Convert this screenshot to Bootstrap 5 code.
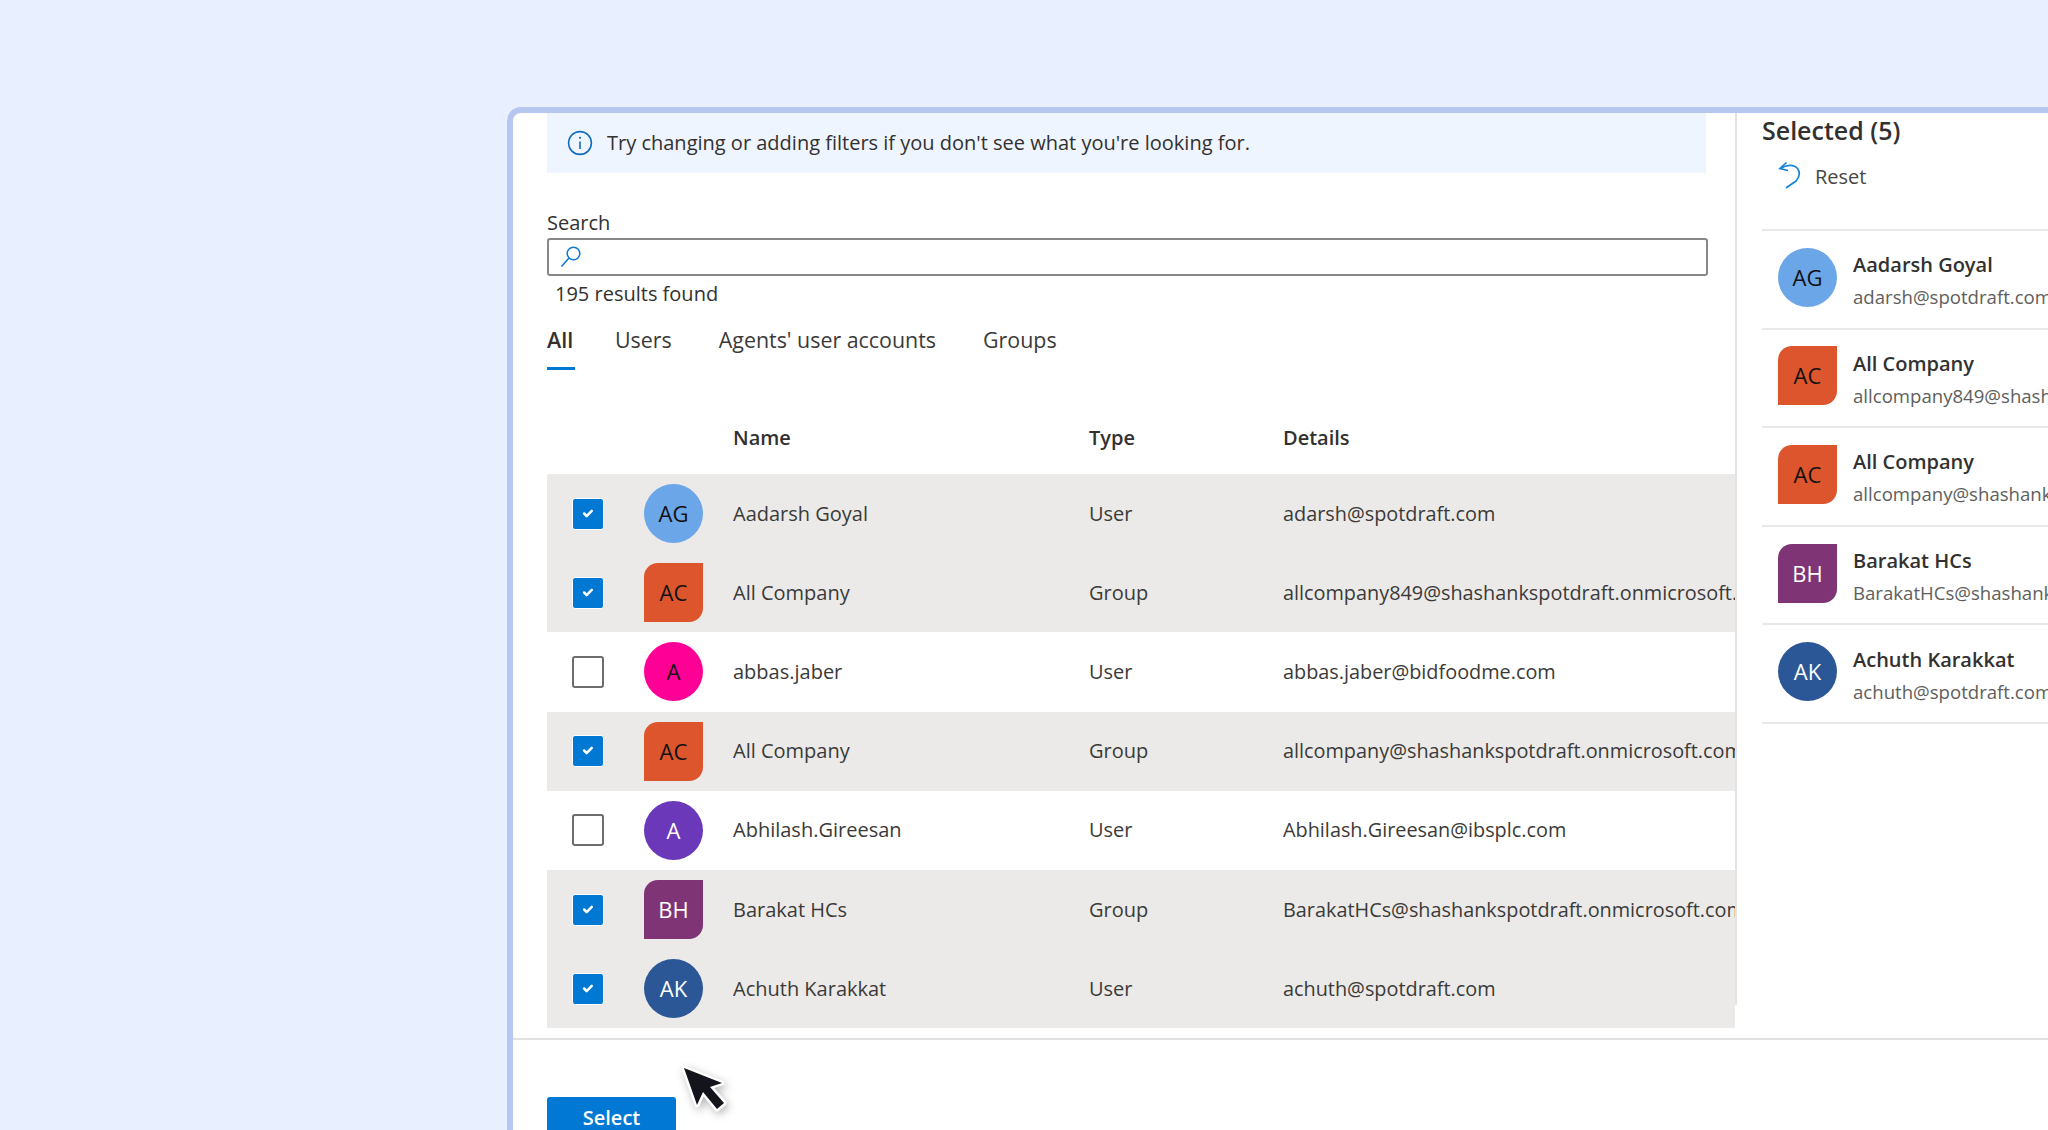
<!DOCTYPE html>
<html lang="en">
<head>
    <meta charset="UTF-8">
    <meta name="viewport" content="width=device-width, initial-scale=1.0">
    <title>Select users and groups</title>
    <link href="https://cdn.jsdelivr.net/npm/bootstrap@5.3.0/dist/css/bootstrap.min.css" rel="stylesheet">
    <style>
        html, body { height: 100%; overflow: hidden; }
        body {
            background: #e8efff;
            font-family: "Open Sans", "Liberation Sans", sans-serif;
            font-size: 20px;
            color: #323130;
            padding: 107px 0 0 507px;
        }
        .app-frame {
            width: 1541px;
            height: 1023px;
            background: #fff;
            border-top: 6px solid #b6c6ef;
            border-left: 6px solid #b6c6ef;
            border-top-left-radius: 14px;
            overflow: hidden;
        }
        .pick-area { height: 925px; }
        .pick-main { width: 1222px; padding-left: 34px; overflow: hidden; }
        .pane-line { width: 2px; height: 892px; background: #e3e3e3; }
        .pick-side { padding-left: 25px; width: 311px; white-space: nowrap; overflow: hidden; }

        .hint-bar {
            width: 1159px;
            height: 60px;
            background: #eff5ff;
            padding-left: 20px;
            gap: 14px;
        }
        .search-label { margin-top: 36px; line-height: 28px; }
        .search-box {
            width: 1161px;
            height: 38px;
            margin-top: 1px;
            border: 2px solid #8a8886;
            border-radius: 3px;
            padding-left: 10px;
        }
        .result-count { margin: 4px 0 0 8px; line-height: 28px; }
        .tab-row { margin-top: 16px; gap: 47px; }
        .tab-row .nav-link {
            color: #3b3a39;
            font-size: 21.4px;
            padding: 0 0 11px;
            line-height: 32px;
            border-bottom: 3px solid transparent;
        }
        .tab-row .nav-link.active {
            color: #323130;
            font-size: 21.5px;
            font-weight: 600;
            min-width: 28px;
            margin-right: -7px;
            border-bottom-color: #0078d4;
        }

        .pick-table { table-layout: fixed; width: 1188px; margin: 32px 0 0; --bs-table-bg: transparent; }
        .pick-table th { height: 72px; padding: 0; font-weight: 600; vertical-align: middle; color: #323130; }
        .pick-table td { height: 79.2px; padding: 0; vertical-align: middle; white-space: nowrap; overflow: hidden; color: #3b3a39; }
        .pick-table td:last-child { font-size: 19.85px; }
        .pick-table tr.is-picked td { background: #ebeae8; }
        .pick-table td:first-child { padding-left: 25px; }
        .col-pick { width: 97px; }
        .col-pic { width: 89px; }
        .col-name { width: 356px; }
        .col-type { width: 194px; }
        .col-info { width: 452px; }

        .form-check-input.pick-check {
            width: 32px; height: 32px; margin: 0; display: block; float: none;
            border-radius: 3px; border: 2px solid #6e6d6b; background-color: #fff;
        }
        .form-check-input.pick-check:checked {
            background-color: #0078d4; border: 1px solid #fff; background-size: 58%;
        }
        .person-pic {
            width: 59px; height: 59px; border-radius: 50%; font-size: 22px;
            display: flex; align-items: center; justify-content: center; color: #111;
        }
        .person-pic.is-group { border-radius: 14px 0 14px 0; }
        .person-pic.on-dark { color: #fff; }
        .tint-blue { background: #6ba6e8; }
        .tint-orange { background: #dc552c; }
        .tint-pink { background: #ff0097; }
        .tint-violet { background: #6a38b8; }
        .tint-plum { background: #7f3476; }
        .tint-navy { background: #2b5797; }

        .side-title { font-size: 25px; font-weight: 600; line-height: 34px; }
        .reset-row { margin-top: 12px; padding-left: 16px; gap: 13px; height: 36px; color: #484644; }
        .reset-row svg { margin-top: -5px; }
        .chosen-list { margin-top: 34px; border-radius: 0; --bs-list-group-bg: transparent; border-top: 2px solid #e8e8e8; }
        .chosen-list .list-group-item {
            height: 98.6px; padding: 0 0 4px 16px; gap: 16px; color: #323130;
            border: 0; border-bottom: 2px solid #e8e8e8; border-radius: 0;
        }
        .chosen-name { font-weight: 600; line-height: 28px; margin-top: 8px; }
        .chosen-mail { font-size: 18.6px; color: #605e5c; line-height: 28px; margin-top: 4px; }

        .foot-bar { border-top: 2px solid #e1e1e1; padding: 57px 0 0 34px; position: relative; }
        .btn.select-btn {
            width: 129px; height: 44px; padding: 0 0 2px; border-radius: 3px; border: 0;
            background: #0078d4; color: #fff; font-size: 20px; font-weight: 600;
        }
        .mouse-arrow { position: absolute; left: 164px; top: 22px; filter: drop-shadow(2px 3px 4px rgba(0,0,0,.28)); }
    </style>
</head>
<body>
    <div class="app-frame">
        <div class="pick-area d-flex">
            <div class="pick-main flex-shrink-0">
                <div class="hint-bar d-flex align-items-center">
                    <svg width="26" height="26" viewBox="0 0 26 26" fill="none" stroke="#0f6cbd" stroke-width="1.6">
                        <circle cx="13" cy="13" r="11.4"/>
                        <path d="M13 11.500v7.500"/>
                        <circle cx="13" cy="7.800" r="1.100" fill="#0f6cbd" stroke="none"/>
                    </svg>
                    <span>Try changing or adding filters if you don't see what you're looking for.</span>
                </div>

                <div class="search-label">Search</div>
                <div class="search-box d-flex align-items-center">
                    <svg width="24" height="24" viewBox="0 0 24 24" fill="none" stroke="#0f78d4" stroke-width="1.5">
                        <circle cx="14.500" cy="8.500" r="6.300"/>
                        <path d="M10 13 2.500 21.500"/>
                    </svg>
                </div>
                <div class="result-count">195 results found</div>

                <ul class="nav tab-row">
                    <li class="nav-item"><a class="nav-link active" href="#">All</a></li>
                    <li class="nav-item"><a class="nav-link" href="#">Users</a></li>
                    <li class="nav-item"><a class="nav-link" href="#">Agents' user accounts</a></li>
                    <li class="nav-item"><a class="nav-link" href="#">Groups</a></li>
                </ul>

                <table class="table table-borderless pick-table">
                    <colgroup>
                        <col class="col-pick"><col class="col-pic"><col class="col-name"><col class="col-type"><col class="col-info">
                    </colgroup>
                    <thead>
                        <tr><th></th><th></th><th>Name</th><th>Type</th><th>Details</th></tr>
                    </thead>
                    <tbody id="pick-rows"></tbody>
                </table>
            </div>

            <div class="pane-line flex-shrink-0"></div>

            <div class="pick-side flex-shrink-0">
                <div class="side-title">Selected (5)</div>
                <div class="reset-row d-flex align-items-center">
                    <svg width="24" height="28" viewBox="0 0 24 28" fill="none" stroke="#1683d8" stroke-width="1.7">
                        <path d="M8.500 1.500 2 7.500l8 2"/>
                        <path d="M2.500 7.500C8 3.500 16 3 19.500 7.500c3 4 1.500 9-1.500 12.500L8 27"/>
                    </svg>
                    <span>Reset</span>
                </div>
                <div class="list-group chosen-list" id="chosen-rows"></div>
            </div>
        </div>

        <div class="foot-bar">
            <button type="button" class="btn select-btn">Select</button>
            <svg class="mouse-arrow" width="60" height="60" viewBox="0 0 60 60">
                <path d="M7 6 45 21 33 25 47 41 40 47 26 30 20 43Z" fill="#14141c" stroke="#fff" stroke-width="5" stroke-linejoin="round" paint-order="stroke"/>
            </svg>
        </div>
    </div>

    <script>
        const people = [
            { name: 'Aadarsh Goyal', type: 'User', mail: 'adarsh@spotdraft.com', init: 'AG', tint: 'tint-blue', picked: true },
            { name: 'All Company', type: 'Group', mail: 'allcompany849@shashankspotdraft.onmicrosoft.com', init: 'AC', tint: 'tint-orange', picked: true },
            { name: 'abbas.jaber', type: 'User', mail: 'abbas.jaber@bidfoodme.com', init: 'A', tint: 'tint-pink', picked: false },
            { name: 'All Company', type: 'Group', mail: 'allcompany@shashankspotdraft.onmicrosoft.com', init: 'AC', tint: 'tint-orange', picked: true },
            { name: 'Abhilash.Gireesan', type: 'User', mail: 'Abhilash.Gireesan@ibsplc.com', init: 'A', tint: 'tint-violet', dark: true, picked: false },
            { name: 'Barakat HCs', type: 'Group', mail: 'BarakatHCs@shashankspotdraft.onmicrosoft.com', init: 'BH', tint: 'tint-plum', dark: true, picked: true },
            { name: 'Achuth Karakkat', type: 'User', mail: 'achuth@spotdraft.com', init: 'AK', tint: 'tint-navy', dark: true, picked: true }
        ];

        function picHtml(p) {
            const group = p.type === 'Group' ? ' is-group' : '';
            const dark = p.dark ? ' on-dark' : '';
            return `<div class="person-pic flex-shrink-0 ${p.tint}${group}${dark}">${p.init}</div>`;
        }

        document.getElementById('pick-rows').innerHTML = people.map(p => `
            <tr class="${p.picked ? 'is-picked' : ''}">
                <td><input class="form-check-input pick-check" type="checkbox" ${p.picked ? 'checked' : ''} aria-label="Select ${p.name}"></td>
                <td>${picHtml(p)}</td>
                <td>${p.name}</td>
                <td>${p.type}</td>
                <td>${p.mail}</td>
            </tr>`).join('');

        document.getElementById('chosen-rows').innerHTML = people.filter(p => p.picked).map(p => `
            <div class="list-group-item d-flex align-items-center">
                ${picHtml(p)}
                <div>
                    <div class="chosen-name">${p.name}</div>
                    <div class="chosen-mail">${p.mail}</div>
                </div>
            </div>`).join('');
    </script>
    <script src="https://cdn.jsdelivr.net/npm/bootstrap@5.3.0/dist/js/bootstrap.bundle.min.js"></script>
</body>
</html>
